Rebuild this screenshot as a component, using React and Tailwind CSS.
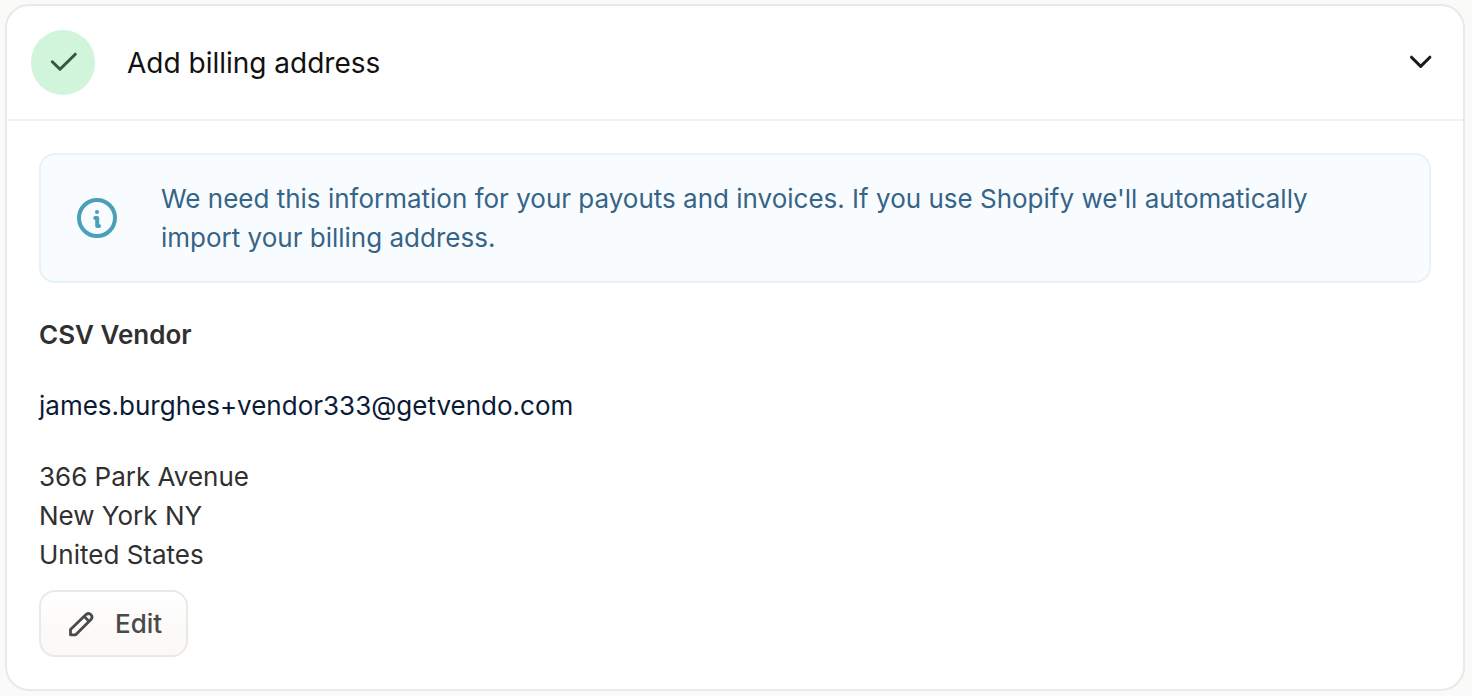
function CheckIcon() {
  return (
    <svg className="h-8 w-8" viewBox="0 0 32 32" fill="none" stroke="#35573f" strokeWidth="3" strokeLinecap="round" strokeLinejoin="round" aria-hidden="true">
      <path d="M5.3 14.8 13 22.3 28.3 7.2" />
    </svg>
  );
}

function ChevronIcon() {
  return (
    <svg className="h-6 w-6" viewBox="0 0 24 24" fill="none" stroke="#1a1a1a" strokeWidth="3" strokeLinecap="round" strokeLinejoin="round" aria-hidden="true">
      <path d="M2.5 6.2 11.7 15.4 20.9 6.2" />
    </svg>
  );
}

function InfoIcon() {
  return (
    <svg className="h-10 w-10" viewBox="0 0 40 40" fill="none" stroke="#4ba0b9" strokeLinecap="round" strokeLinejoin="round" aria-hidden="true">
      <circle cx="20" cy="20" r="18" strokeWidth="4" />
      <circle cx="20" cy="14" r="2.1" fill="#4ba0b9" stroke="none" />
      <path d="M18.2 19.9H20.2V27.9H22" strokeWidth="4" />
    </svg>
  );
}

function PencilIcon() {
  return (
    <svg className="h-7 w-7" viewBox="0 0 28 28" fill="none" stroke="#4a4a4a" strokeWidth="2.8" strokeLinejoin="round" aria-hidden="true">
      <path d="M3.5 19.6 19.3 4.3a3.5 3.5 0 0 1 4.9 4.9L8.7 24.8H3.5Z" />
      <path d="M17.2 6.4 22 11.4" />
    </svg>
  );
}

export default function App() {
  return (
    <main className="min-h-screen bg-[#fafaf8] pt-1 pr-[7px] pb-[5px] pl-[5px] font-[Inter,sans-serif] text-[26px] leading-[39px] text-[#303030]">
      <section className="overflow-hidden rounded-3xl border-2 border-[#e9e9e8] bg-white">
        <h2 className="border-b-2 border-[#f1f1f1] font-normal">
          <button type="button" aria-expanded="true" className="flex w-full items-center gap-8 py-6 pr-[30px] pl-6 text-left text-[28px] leading-[42px] text-[#111111]">
            <span className="flex h-[65px] w-16 shrink-0 items-center justify-center rounded-full bg-[#d1f5da]">
              <CheckIcon />
            </span>
            <span className="flex-1">Add billing address</span>
            <ChevronIcon />
          </button>
        </h2>
        <div className="p-8">
          <div role="note" className="flex items-center gap-11 rounded-2xl border-2 border-[#e5f2f6] bg-[#f9fcff] px-9 py-6 text-[#366487]">
            <span className="shrink-0">
              <InfoIcon />
            </span>
            <p>We need this information for your payouts and invoices. If you use Shopify we'll automatically import your billing address.</p>
          </div>
          <div className="mt-8 flex flex-col gap-8">
            <p className="font-semibold">CSV Vendor</p>
            <p>
              <a href="mailto:james.burghes+vendor333@getvendo.com" className="text-[#0b1b35]">james.burghes+vendor333@getvendo.com</a>
            </p>
            <address className="not-italic">
              366 Park Avenue
              <br />
              New York NY
              <br />
              United States
            </address>
          </div>
          <button type="button" className="mt-4 flex items-center gap-5 rounded-2xl border-2 border-[#e9e9e8] bg-linear-to-b from-white via-[#fcfbf9] to-[#fcf8f5] py-3 pr-6 pl-[26px] font-medium text-[#4a4a4a]">
            <PencilIcon />
            Edit
          </button>
        </div>
      </section>
    </main>
  );
}
